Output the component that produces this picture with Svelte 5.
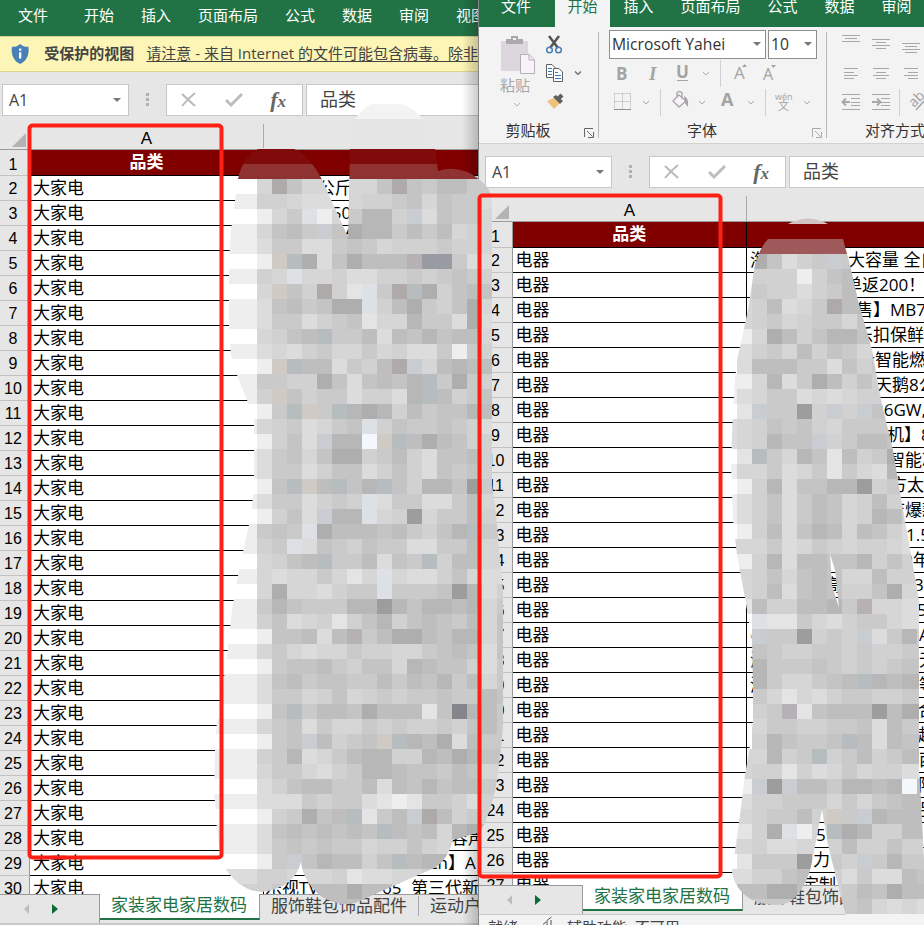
<script>
	const tabs = ['文件', '开始', '插入', '页面布局', '公式', '数据', '审阅', '视图'];

	// text that runs past column A, as [left offset, text] pairs keyed by row
	const leftOverflow = {
		2: [[44, '0公斤']],
		3: [[58, '250']],
		4: [[62, '海尔']],
		28: [[187, '容声']],
		29: [[155, 'nch】A']],
		30: [[1, '乐视TV'], [118, '65'], [147, '第三代新']]
	};
	const rightOverflow = {
		2: [[3, '海'], [101, '大容量 全自']],
		3: [[98, '单返200！']],
		4: [[109, '售】MB7']],
		5: [[109, '乐扣保鲜盒']],
		6: [[111, '计智能燃']],
		7: [[128, '天鹅8公']],
		8: [[127, '26GW,']],
		9: [[140, '机】8']],
		10: [[141, '智能冰']],
		11: [[143, '方太 ']],
		12: [[141, '店爆款']],
		13: [[159, '1.5']],
		14: [[156, '0年']],
		15: [[77, '高'], [167, '3公']],
		16: [[170, '5']],
		17: [[3, 'G'], [172, 'A']],
		18: [[3, '海'], [172, '无']],
		19: [[3, '海'], [172, '等']],
		20: [[171, '合']],
		21: [[171, '超']],
		22: [[172, '西']],
		23: [[171, '限']],
		24: [[171, '品']],
		25: [[69, '5日']],
		26: [[66, '力']],
		27: [[55, '定制']]
	};

	const books = [
		{ id: 'left', value: '大家电', rows: 30, overflow: leftOverflow, sheets: ['家装家电家居数码', '服饰鞋包饰品配件', '运动户外'] },
		{ id: 'right', value: '电器', rows: 27, overflow: rightOverflow, sheets: ['家装家电家居数码', '服饰鞋包饰品配件'] }
	];

	const tones = {
		'.': '#ffffff', W: '#eeeeee', A: '#f4f8fc',
		0: '#9d9d9d', 1: '#aeaeae', 2: '#b7b7b7', 3: '#bebebf', 4: '#c4c4c4',
		5: '#cacaca', 6: '#d0d1d0', 7: '#d6d6d6', 8: '#dcdcdc', 9: '#e4e4e4',
		b: '#b7bcbf', c: '#dde1e6', d: '#c9cdd1', t: '#d0cac5', r: '#aeaaa9', p: '#b5b1b4',
		s: '#989ba1', D: '#85868b', n: '#f3f3f3', m: '#e5e5e5', x: '#7f0b0b', y: '#8f3232',
		z: '#a0595b', k: '#d3c3c3', h: '#800000'
	};
	const CELL = 15;

	// pixelated strokes over the product names, one character per cell
	const mosaics = [
		{
			id: 'blurLeft',
			x: 212,
			y: 104,
			path: 'M238 179C242 160 252 150 262 148L294 149C308 155 320 172 328 193L348 237L350 149V119H355Q362 108 372 104H402Q414 108 423 119L428 140L435 149L438 171Q460 164 480 180Q490 187 492 200V485L495 505L503 590V725L502 740L497 780Q492 812 480 832L453 840Q447 863 430 870L400 883L355 903Q340 907 322 897Q303 882 301 862Q294 888 262 892Q240 891 225 868Q218 855 216 815L214 790L215 750L217 720L222 690L226 665L232 610L239 570L250 520L254 490V420L247 400L237 375L231 355L229 330V260L231 230Z',
			rows: [
				'nnnnnnnnnnnnnnnnnnnn',
				'mmmmmmmmmmmmmmmmmmmm',
				'mmmmmmmmmmmmmmmmmmmm',
				'xxxxxxxxxxxxxxxxxxmm',
				'yyyyyyyyyyyyyyyyyymm',
				'...7r4777774r4533555',
				'WWW66788876654745588',
				'...W75cW75226d845577',
				'WWW7435d412253537677',
				'WWW85588545766656677',
				'...Wtb1841333pss5887',
				'WWW67c77688665654566',
				'...7t46r69c5rb164344',
				'WWW8435411c631564177',
				'WWW85586549772558188',
				'...7643b553834243377',
				'WWW8786577576885W566',
				'...Wtb338563rd732333',
				'WWW55661484342b51566',
				'WWW6t465586682b36544',
				'...W5bt5b21263544233',
				'WWW7658754c645545688',
				'...W648d22Atb3134666',
				'WWW85474116536844366',
				'WWW85586448646845466',
				'...W4bt3b42b46224055',
				'WWW8558656c855885377',
				'...W648d22c760755366',
				'WWW545c1333435642b55',
				'WWW65c84564558855377',
				'...7643b553845b63377',
				'WWW78775797c78864788',
				'...71778655c55540286',
				'WWW52455522024223275',
				'WWW64876964264345374',
				'...W44383p5311342274',
				'WWW75787756677543484',
				'...W5443564472344685',
				'WWW84354455353425375',
				'WWW85576476565545534',
				'...W4b5334133394D235',
				'WWW75485775656656435',
				'...W54d3654tb2318355',
				'WWW65287532266231244',
				'WWW75578652234453476',
				'...86433553834243357',
				'WWW888565589W9556866',
				'...W65143b953dr36566',
				'WWW84343434b34372122',
				'WWW85454557664676666',
				'...W5d423364b3223666',
				'88866777698877666666',
				'66665333313366666666',
				'55555533333366666666'
			]
		},
		{
			id: 'blurRight',
			x: 722,
			y: 209,
			path: 'M788 224Q808 213 828 224ZM768 239H843L850 265L858 300L872 350L881 400L893 450L903 510L912 560L919 600V770L921 800L924 860V925H848L838 885L828 845L822 810L818 830L812 862Q807 888 790 902Q775 909 752 900Q735 890 732 872L740 815L745 775L750 745L753 720V690L752 640L745 598L737 555L733 520L731 465L733 410L735 380L737 360L748 310L754 270Q758 250 768 239ZM830 554L832 585L839 608L835 570Z',
			rows: [
				'kkkkkkkkkkkkkk',
				'hhhhhhhhhhhhhh',
				'zzzzzzzzzzzzzz',
				'7714865d555555',
				'77666W64355555',
				'77566865355555',
				'7763875r333333',
				'77657655745555',
				'.W713642245555',
				'.8657364575555',
				'.8333558465555',
				'WW728513646555',
				'W8755878766555',
				'.9d5506d6d4555',
				'87645467555555',
				'876244d6533444',
				'.9b57249365155',
				'W7758759578255',
				'.W628442206555',
				'W8648534763666',
				'W8648534762366',
				'.W638423734688',
				'77758756766788',
				'.W628334426466',
				'.7647434773666',
				'.7638434664177',
				'.93663325p7788',
				'..c99578655788',
				'..d550656d8526',
				'..456655656655',
				'..255545656544',
				'..2577543b2322',
				'..579786556655',
				'..65p943330311',
				'..755665548355',
				'..624554b38344',
				'.77265b6536533',
				'.7669687576688',
				'.Wd0d3352232A3',
				'.8665557575433',
				'7765536t5d2333',
				'W961cW7b126633',
				'87688776366466',
				'.95550656d5255',
				'88664356858834',
				'W3311356534133',
				'55555555547878',
				'nnnnnnnnnnnnnn'
			]
		}
	];

	const chevrons = [[706, 74], [646, 103], [702, 103], [751, 103], [807, 103]];
	// x, y, width of the long line, inset of the short one, number of lines
	const alignIcons = [
		[842, 35, 18, 3, 3], [872, 39, 18, 4, 4], [902, 43, 18, 3, 4],
		[844, 68, 14, 0, 4], [873, 68, 16, 3, 4], [904, 68, 14, 4, 4]
	];

	function range(n) {
		return Array.from({ length: n }, (_, i) => i + 1);
	}

	function alignPath([x, y, width, inset, count], i) {
		let d = '';
		for (let k = 0; k < count; k++) {
			const short = k % 2 === 1;
			const w = !short ? width : i === 3 || i === 5 ? width - 4 : width - inset * 2;
			d += `M${x + (short ? inset : 0)} ${y + k * 3 + (i > 2 && k > 0 ? 1 : 0) + 0.5}h${w}`;
		}
		return d;
	}
</script>

{#snippet formulaBar()}
	<div class="formula-bar">
		<div class="box name-box"><span>A1</span><i class="caret"></i></div>
		<div class="dots"><i></i><i></i><i></i></div>
		<div class="box fx-box">
			<svg width="16" height="16" viewBox="0 0 16 16"><path d="M1 2L14 14M14 1C9 5 5 9 1 14" fill="none" stroke="#b9b9b9" stroke-width="2" /></svg>
			<svg width="18" height="16" viewBox="0 0 18 16"><path d="M1 8L6 13L17 2" fill="none" stroke="#bdbdbd" stroke-width="3" /></svg>
			<span class="fx">f<small>x</small></span>
		</div>
		<div class="box value-box">品类</div>
	</div>
{/snippet}

{#snippet grid(book)}
	<div class="grid">
		<div class="line head">
			<div class="num corner"><svg width="14" height="14"><path d="M14 0V14H0Z" fill="#b3b3b3" /></svg></div>
			<div class="col-a">A</div>
			<div class="col-b"></div>
		</div>
		{#each range(book.rows) as n}
			<div class="line" class:title={n === 1}>
				<div class="num">{n}</div>
				<div class="col-a">{n === 1 ? '品类' : book.value}</div>
				<div class="col-b">
					{#each book.overflow[n] ?? [] as [left, text]}
						<span style="padding-left: {left}px">{text}</span>
					{/each}
				</div>
			</div>
		{/each}
	</div>
{/snippet}

{#snippet sheetBar(book)}
	<div class="sheets">
		<div class="nav">
			<svg width="7" height="10"><path d="M6 0V10L1 5Z" fill="#bdbdbd" /></svg>
			<svg width="7" height="10"><path d="M0 0V10L6 5Z" fill="#0c6b35" /></svg>
		</div>
		{#each book.sheets as sheet, i}
			<div class="sheet" class:active={i === 0}><span>{sheet}</span></div>
		{/each}
	</div>
{/snippet}

{#snippet launcher(color)}
	<svg class="launcher" width="10" height="10" viewBox="0 0 10 10" fill="none" stroke={color}>
		<path d="M.5 9V.5H9M3 3L8.500 8.500M9.500 4V9.500H4" />
	</svg>
{/snippet}

<main>
	<section class="window left">
		<nav>
			{#each tabs as tab}<span>{tab}</span>{/each}
		</nav>
		<div class="notice">
			<svg width="20" height="22" viewBox="0 0 20 22">
				<path d="M10 0C7 3 4 3 1 3C0 11 2 18 10 22C18 18 20 11 19 3C16 3 13 3 10 0Z" fill="#4a80b8" />
				<path d="M10 5V7.500M10 9V16" stroke="#fff" stroke-width="2.500" />
			</svg>
			<b>受保护的视图</b>
			<u>请注意 - 来自 Internet 的文件可能包含病毒。除非</u>
		</div>
		{@render formulaBar()}
		{@render grid(books[0])}
		{@render sheetBar(books[0])}
	</section>

	<section class="window right">
		<nav>
			{#each tabs as tab, i}<span class:active={i === 1}>{tab}</span>{/each}
		</nav>
		<div class="ribbon">
			<div class="group clipboard">
				<svg width="119" height="91" viewBox="479 28 119 91">
					<path d="M501 41H528V71H501Z" fill="#dcd7dc" />
					<path d="M506 39H511V36H518V39H523V44H506Z" fill="#aaaaaa" />
					<path d="M513 38H516V40H513Z" fill="#f3f3f3" />
					<path d="M520.500 54.500H529L534.500 60V73.500H520.500Z" fill="#f8f3f9" stroke="#b5afb7" />
					<path d="M529 54.500V60H534.500" fill="none" stroke="#b5afb7" />
					<text x="500" y="91" font-size="15" fill="#aaa6aa">粘贴</text>
					<path d="M514 103L517 106L520 103" fill="none" stroke="#b3b3b3" />
					<path d="M549 36L558 48M559 36L550 48" stroke="#555" stroke-width="2.500" />
					<g fill="none" stroke="#4a7fb5" stroke-width="1.500">
						<circle cx="549.500" cy="50" r="2.800" />
						<circle cx="558.500" cy="50" r="2.800" />
					</g>
					<g fill="#fff" stroke="#606060">
						<path d="M546.500 64.500H552L555.500 68V77.500H546.500Z" />
						<path d="M553.500 68.500H559L562.500 72V81.500H553.500Z" />
					</g>
					<path d="M548 68.500H552M548 71.500H552M548 74.500H552M555 72.500H558M555 75.500H561M555 78.500H561" stroke="#3978b9" />
					<path d="M575 71.500L578 74.500L581 71.500" fill="none" stroke="#666" stroke-width="1.200" />
					<path d="M547 101L554 98L560 103L554 109Z" fill="#efc27a" />
					<path d="M553 97L556 95L563 101L560 104Z" fill="#606060" />
					<path d="M558 99L562 95" stroke="#606060" stroke-width="4" />
				</svg>
				<div class="caption">剪贴板{@render launcher('#666')}</div>
			</div>

			<div class="group font">
				<div class="combos">
					<div class="combo family">Microsoft Yahei<i class="caret"></i></div>
					<div class="combo size">10<i class="caret"></i></div>
				</div>
				<svg width="227" height="60" viewBox="599 59 227 60" fill="#a3a3a3">
					<text x="616" y="80" font-size="17" font-weight="700">B</text>
					<text x="649" y="80" font-size="19" font-weight="700" font-style="italic" class="serif">I</text>
					<text x="676" y="78" font-size="17" font-weight="700">U</text>
					<path d="M677 80.500H688" stroke="#a3a3a3" />
					<text x="734" y="79" font-size="17">A</text>
					<path d="M742 67L744.500 64L747 67Z" />
					<text x="763" y="80" font-size="16">A</text>
					<path d="M771 65H776L773.500 68Z" />
					<path d="M720.500 60V87M660.500 89V116M765.500 89V116" stroke="#d0d0d0" />
					<g fill="none" stroke="#aaa">
						<path d="M614.500 93.500H630.500V109M614.500 93.500V109M622.500 93.500V109M614.500 101.500H630.500" stroke-dasharray="1 1" />
						<path d="M614 109.500H631" stroke="#909090" />
						{#each chevrons as [x, y]}
							<path d="M{x - 3} {y - 2}L{x} {y + 1}L{x + 3} {y - 2}" />
						{/each}
						<path d="M679 95L686 101L679 107L673 101ZM677 97V93Q679.500 90 682 93V99" fill="#f8f3f9" stroke-width="1.400" />
					</g>
					<path d="M684 96Q689 98 688 107L685 103Z" />
					<text x="721" y="106" font-size="18" font-weight="700">A</text>
					<text x="775" y="100" font-size="9">wén</text>
					<text x="778" y="110" font-size="11">文</text>
				</svg>
				<div class="caption">字体{@render launcher('#aaa')}</div>
			</div>

			<div class="group align">
				<svg width="97" height="91" viewBox="827 28 97 91" fill="none" stroke="#a8a8a8">
					{#each alignIcons as icon, i}
						<path d={alignPath(icon, i)} />
					{/each}
					{#each [842, 872] as x, i}
						<path d="M{x} 94.500h18M{x + 9} 98.500h9M{x + 9} 102.500h9M{x + 9} 105.500h9M{x} 109.500h18" />
						<path d={i ? 'M872 102H880M877 98.500L880.500 102L877 105.500' : 'M843 102H850M846 98.500L842.500 102L846 105.500'} stroke-width="2" />
					{/each}
					<path d="M899.500 89V116" stroke="#d0d0d0" />
					<text x="0" y="0" transform="translate(914 108) rotate(-45)" font-size="14" fill="#a0a0a0" stroke="none">ab</text>
					<path d="M916 110L924 101" stroke-width="1.500" />
				</svg>
				<div class="caption">对齐方式</div>
			</div>
		</div>
		{@render formulaBar()}
		{@render grid(books[1])}
		{@render sheetBar(books[1])}
		<div class="status">
			<span>就绪</span>
			<svg width="12" height="10" viewBox="0 0 12 10" fill="none" stroke="#555"><path d="M9.500 2L5 5.500V10M1 9.500L4 7M9 5V10" /></svg>
			<span>辅助功能: 不可用</span>
		</div>
	</section>

	<svg class="overlay" width="924" height="925" viewBox="0 0 924 925">
		{#each mosaics as m}
			<clipPath id={m.id}><path d={m.path} clip-rule="evenodd" /></clipPath>
			<g clip-path="url(#{m.id})" shape-rendering="crispEdges">
				{#each m.rows as row, r}
					{#each row as tone, c}
						<rect x={m.x + c * CELL} y={m.y + r * CELL} width={CELL} height={CELL} fill={tones[tone]} />
					{/each}
				{/each}
			</g>
		{/each}
		<g fill="none" stroke="#ff2015" stroke-width="4">
			<rect x="29.500" y="125.500" width="192" height="732" rx="3" />
			<rect x="479.500" y="195.500" width="241" height="681" rx="3" />
		</g>
	</svg>
</main>

<style>
	:global(body) {
		margin: 0;
	}

	main {
		position: relative;
		display: flex;
		width: 924px;
		height: 925px;
		overflow: hidden;
		background: #e6e6e6;
		font-family: "Open Sans", "Noto Sans CJK SC", sans-serif;
		white-space: nowrap;
	}

	.window {
		display: flex;
		flex-direction: column;
		box-sizing: border-box;
		height: 925px;
		overflow: hidden;
		background: #e6e6e6;
	}
	.left {
		position: relative;
		width: 478px;
	}
	.left::after {
		content: "";
		position: absolute;
		inset: 0 0 0 auto;
		width: 16px;
		background: linear-gradient(to right, transparent, rgba(0, 0, 0, 0.2));
	}
	.right {
		width: 446px;
		border-left: 1px solid #858585;
	}

	nav {
		display: flex;
		flex: none;
		height: 36px;
		background: #217346;
		color: #fff;
		font-size: 15px;
		line-height: 30px;
	}
	nav span {
		flex: none;
		padding: 0 13.5px;
	}
	nav span:first-child {
		padding: 0 22.5px 0 18px;
	}
	.right nav {
		height: 27px;
		line-height: 12px;
	}
	.right nav span:first-child {
		padding: 0 24px 0 22px;
	}
	.right nav span.active {
		padding: 0 12.5px;
		background: #f3f3f3;
		color: #217346;
	}

	.notice {
		display: flex;
		flex: none;
		align-items: center;
		box-sizing: border-box;
		height: 36px;
		padding-left: 11px;
		border-top: 1px solid #d9d58a;
		border-bottom: 1px solid #d9d58a;
		background: #fcf5b5;
		color: #444;
		font-size: 15px;
		line-height: 20px;
	}
	.notice b,
	.notice u {
		margin-bottom: 2px;
	}
	.notice b {
		margin-right: 12px;
		margin-left: 15px;
	}
	.notice u {
		text-underline-offset: 2px;
		text-decoration-thickness: 1px;
	}

	.formula-bar {
		display: flex;
		flex: none;
		height: 33px;
		padding: 12px 0 7px 2px;
		color: #444;
	}
	.right .formula-bar {
		padding-left: 6px;
	}
	.box {
		display: flex;
		flex: none;
		align-items: center;
		box-sizing: border-box;
		height: 32px;
		border: 1px solid #c6c6c6;
		background: #fff;
	}
	.name-box {
		justify-content: space-between;
		width: 127px;
		padding: 0 7px 0 6px;
		font-size: 16px;
	}
	.caret {
		border: 4px solid transparent;
		border-top-color: #777;
		border-bottom: 0;
	}
	.dots {
		display: flex;
		flex-direction: column;
		gap: 2px;
		width: 3px;
		margin: 9px 17px 0;
	}
	.dots i {
		width: 3px;
		height: 3px;
		background: #b0b0b0;
	}
	.fx-box {
		justify-content: space-between;
		width: 137px;
		padding: 0 16px 0 14px;
	}
	.fx {
		font: italic bold 22px "Liberation Serif", serif;
		color: #666;
	}
	.fx small {
		font-size: 17px;
	}
	.value-box {
		width: 300px;
		margin-left: 3px;
		padding: 0 0 4px 13px;
		font-size: 18px;
	}

	.grid {
		flex: 1;
		min-height: 0;
		overflow: hidden;
		background: #fff;
		color: #000;
		font-size: 17px;
	}
	.line {
		display: flex;
		height: 25px;
		line-height: 24px;
	}
	.line > div {
		box-sizing: border-box;
		flex: none;
		height: 25px;
		border-bottom: 1px solid #000;
		overflow: hidden;
	}
	.line .num {
		width: 30px;
		padding-right: 3px;
		border-right: 1px solid #999;
		border-bottom-color: #c2c2c2;
		background: #e6e6e6;
		font: 16px/26px "Liberation Sans", sans-serif;
		text-align: center;
	}
	.col-a {
		width: 234px;
		padding-left: 3px;
		border-right: 1px solid #000;
	}
	.right .num {
		width: 34px;
		padding-right: 0;
	}
	.right .col-a {
		padding-left: 2.5px;
	}
	.col-b {
		display: grid;
		justify-items: start;
		width: 215px;
	}
	.col-b span {
		grid-area: 1 / 1;
	}
	.line.title,
	.line.title > div {
		height: 26px;
	}
	.line.title .num {
		line-height: 30px;
	}
	.title .col-a,
	.title .col-b {
		background: #800000;
	}
	.title .col-a {
		padding-right: 3px;
		color: #fff;
		font-weight: 700;
		text-align: center;
	}
	.line.head,
	.line.head > div {
		height: 26px;
		border-bottom-color: #999;
		background: #e6e6e6;
	}
	.line.head .col-a {
		padding: 3px 0 0;
		border-right-color: #aaa;
		font-family: "Liberation Sans", sans-serif;
		text-align: center;
	}
	.line .corner {
		padding: 9px 3px 0 0;
		border-right-color: transparent;
		line-height: 0;
		text-align: right;
	}

	.sheets {
		display: flex;
		flex: none;
		height: 31px;
		box-sizing: border-box;
		border-bottom: 2px solid #c9c9c9;
		color: #444;
		font-size: 17px;
		line-height: 20px;
	}
	.right .sheets {
		height: 30px;
		border-bottom-width: 1px;
	}
	.nav {
		display: flex;
		flex: none;
		align-items: center;
		gap: 22px;
		box-sizing: border-box;
		width: 100px;
		padding-left: 23px;
		border-top: 1px solid #999;
		border-right: 1px solid #999;
	}
	.right .nav {
		width: 104px;
		padding-left: 27px;
	}
	.sheet {
		flex: none;
		box-sizing: border-box;
		border-top: 1px solid #999;
	}
	.sheet span {
		display: block;
		padding: 0 11px;
		border-right: 1px solid #aaa;
		margin-top: 1px;
	}
	.sheet.active {
		height: 26px;
		border-top: 0;
		border-right: 1px solid #999;
		border-bottom: 2px solid #217346;
		background: #fff;
		color: #217346;
	}
	.sheet.active span {
		border-right: 0;
		padding: 0 12px 0 11px;
	}
	.status {
		display: flex;
		flex: none;
		height: 10px;
		padding-left: 9px;
		overflow: hidden;
		background: #f3f3f3;
		color: #444;
		font-size: 15px;
		line-height: 24px;
	}
	.status svg {
		margin: 0 13px 0 24px;
	}

	.ribbon {
		display: flex;
		flex: none;
		box-sizing: border-box;
		height: 117px;
		border-bottom: 1px solid #d2d2d2;
		background: #f3f3f3;
		color: #333;
		font-size: 15px;
	}
	.group {
		display: flex;
		flex: none;
		flex-direction: column;
		position: relative;
	}
	.group > svg {
		display: block;
		flex: none;
		margin-top: 1px;
	}
	.group + .group::before {
		content: "";
		position: absolute;
		inset: 5px auto 5px -1px;
		width: 1px;
		background: #b9b9b9;
	}
	.clipboard {
		width: 120px;
	}
	.font {
		width: 228px;
	}
	.align {
		width: 98px;
	}
	.combos {
		display: flex;
		gap: 2px;
		height: 28px;
		padding: 3px 0 0 10px;
	}
	.combo {
		display: flex;
		align-items: center;
		justify-content: space-between;
		box-sizing: border-box;
		height: 29px;
		padding: 0 4px 2px 2px;
		border: 1px solid #8f8f8f;
		background: #fff;
		font-size: 15.700px;
	}
	.family {
		width: 157px;
	}
	.size {
		width: 49px;
	}
	.caption {
		display: flex;
		justify-content: center;
		line-height: 23px;
		padding-right: 22px;
		position: relative;
	}
	.align .caption {
		justify-content: flex-start;
		padding: 0 0 0 38px;
	}
	.launcher {
		position: absolute;
		right: 5px;
		top: 9px;
	}
	.serif {
		font-family: "Liberation Serif", serif;
	}

	.overlay {
		position: absolute;
		inset: 0;
	}
</style>
